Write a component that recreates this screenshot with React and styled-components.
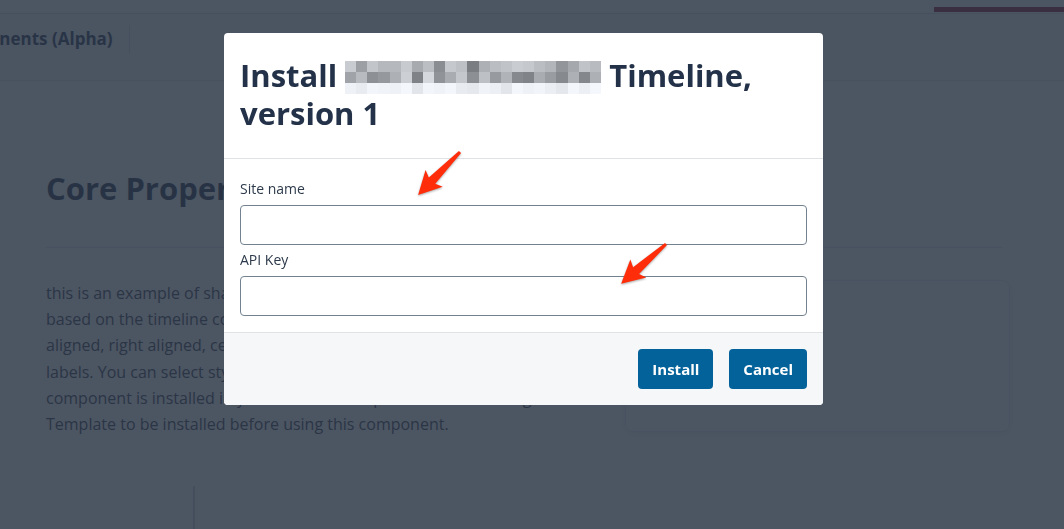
import styled, { createGlobalStyle } from "styled-components";

const GlobalStyle = createGlobalStyle`
  html, body {
    margin: 0;
    padding: 0;
    height: 100%;
  }
  body {
    font-family: "Open Sans", "Liberation Sans", sans-serif;
    background: #fdfdfd;
    overflow: hidden;
  }
  * {
    box-sizing: border-box;
  }
`;

// pixelated redaction in the dialog title
const REDACTED = [
  "c8 9c c2 b5 b5 c7 a7 bb 8a c5 bd 7a ad ba c0 c9 c5 ba b2 92 a5 c0 b8",
  "a0 b8 8d 95 ad cc 7f d5 90 a9 c4 8c bd 97 b0 86 80 a9 99 86 ad 84 ad",
  "ee e8 f2 f0 ee f4 e2 f2 ef f3 e8 e5 f0 ec e2 f3 ee f1 eb e4 f3 ec f4",
].map((row) => row.split(" ").map((v) => parseInt(v, 16)));

const Redaction = () => (
  <RedactionSvg viewBox="0 0 23 3" preserveAspectRatio="none" shapeRendering="crispEdges">
    {REDACTED.map((row, y) =>
      row.map((v, x) => (
        <rect key={`${x}-${y}`} x={x} y={y} width="1.02" height="1.02" fill={`rgb(${v},${v + 3},${Math.min(v + 8, 255)})`} />
      ))
    )}
  </RedactionSvg>
);

const Arrow = ({ left, top, angle }) => (
  <ArrowSvg $left={left} $top={top} width="140" height="140" viewBox="-70 -70 140 140">
    <polygon transform={`rotate(${angle})`} points="0,-1.5 40,-4.5 37,-12 60,0 37,12 40,4.5 0,1.5" />
  </ArrowSvg>
);

const App = () => (
  <>
    <GlobalStyle />
    <Page>
      <TopStrip>
        <AccentBar />
      </TopStrip>
      <NavBar>
        <Tab>Components (Alpha)</Tab>
      </NavBar>
      <Content>
        <Heading>Core Properties</Heading>
        <Rule />
        <Columns>
          <Paragraph>
            this is an example of shared component, a timeline built in LWC. It is
            based on the timeline component and supports vertical layouts with left
            aligned, right aligned, center aligned and alternating items with date
            labels. You can select styles and colors in the property panel. This
            component is installed in your site and it requires the Shared Page
            Template to be installed before using this component.
          </Paragraph>
          <Card />
        </Columns>
        <Preview />
      </Content>
    </Page>

    <Overlay>
      <Dialog>
        <DialogHeader>
          <Title>
            Install <Redaction /> Timeline, version 1
          </Title>
        </DialogHeader>
        <DialogBody>
          <Field>
            <Label>Site name</Label>
            <Input type="text" />
          </Field>
          <Field>
            <Label>API Key</Label>
            <Input type="text" />
          </Field>
        </DialogBody>
        <DialogFooter>
          <Button>Install</Button>
          <Button>Cancel</Button>
        </DialogFooter>
        <Arrow left={166} top={49} angle={134.3} />
        <Arrow left={372} top={141} angle={138.4} />
      </Dialog>
    </Overlay>
  </>
);

const Page = styled.div`
  width: 100%;
  height: 100vh;
  overflow: hidden;
`;

const TopStrip = styled.div`
  height: 14px;
  background: #ffffff;
  border-bottom: 1px solid #d4d7dd;
  display: flex;
  justify-content: flex-end;
  align-items: flex-end;
`;

const AccentBar = styled.div`
  width: 130px;
  height: 5px;
  margin-bottom: 1px;
  background: #83021e;
`;

const NavBar = styled.div`
  height: 67px;
  background: #f3f4f6;
  border-bottom: 1px solid #e3e6ea;
  display: flex;
  align-items: flex-start;
  padding-top: 11px;
  overflow: hidden;
`;

const Tab = styled.div`
  margin-left: -60px;
  padding-right: 16px;
  border-right: 1px solid #d3d7dd;
  font-size: 17px;
  line-height: 28px;
  font-weight: 700;
  color: #0f2647;
  white-space: nowrap;
`;

const Content = styled.div`
  padding: 0 54px 0 46px;
`;

const Heading = styled.h1`
  margin: 88px 0 0;
  font-size: 31px;
  line-height: 38px;
  font-weight: 700;
  color: #0a1d3a;
`;

const Rule = styled.hr`
  margin: 40px 8px 0 0;
  border: none;
  border-top: 1px solid #dfe3e8;
`;

const Columns = styled.div`
  display: flex;
  gap: 24px;
  margin-top: 32px;
`;

const Paragraph = styled.p`
  width: 555px;
  margin: 0;
  font-size: 16px;
  line-height: 26.2px;
  color: #1c2b43;
`;

const Card = styled.div`
  width: 385px;
  height: 152px;
  background: #ffffff;
  border: 1px solid #e8ebee;
  border-radius: 8px;
  box-shadow: 0 2px 6px rgba(0, 0, 0, 0.08);
`;

const Preview = styled.div`
  margin: 49px 0 0 147px;
  height: 100px;
  border-left: 2px solid #cbd0d8;
`;

const Overlay = styled.div`
  position: fixed;
  inset: 0;
  background: rgba(45, 55, 70, 0.85);
`;

const Dialog = styled.div`
  position: relative;
  width: 599px;
  margin: 33px 0 0 224px;
  background: #ffffff;
  border-radius: 4px;
`;

const DialogHeader = styled.div`
  padding: 23px 16px 26px;
  border-bottom: 1px solid #dfe3e8;
`;

const Title = styled.h2`
  margin: 0;
  font-size: 31px;
  line-height: 38px;
  font-weight: 700;
  color: #243249;
`;

const RedactionSvg = styled.svg`
  display: inline-block;
  width: 256px;
  height: 33px;
  vertical-align: -7px;
`;

const DialogBody = styled.div`
  padding: 20px 16px 16px;
`;

const Field = styled.div`
  & + & {
    margin-top: 5px;
  }
`;

const Label = styled.label`
  display: block;
  margin-bottom: 6px;
  font-size: 14px;
  line-height: 20px;
  color: #2d3a4b;
`;

const Input = styled.input`
  display: block;
  width: 100%;
  height: 40px;
  padding: 0 12px;
  border: 1px solid #748290;
  border-radius: 4px;
  background: #ffffff;
  font: inherit;
  outline: none;
`;

const DialogFooter = styled.div`
  display: flex;
  justify-content: flex-end;
  gap: 16px;
  padding: 16px;
  background: #f6f7f9;
  border-top: 1px solid #dfe3e8;
  border-radius: 0 0 4px 4px;
`;

const Button = styled.button`
  height: 40px;
  padding: 0 14px;
  border: none;
  border-radius: 4px;
  background: #04629a;
  color: #ffffff;
  font-family: inherit;
  font-size: 15px;
  font-weight: 700;
`;

const ArrowSvg = styled.svg`
  position: absolute;
  left: ${(p) => p.$left}px;
  top: ${(p) => p.$top}px;
  pointer-events: none;
  overflow: visible;
  fill: #ff2d0a;
  filter: drop-shadow(0 1px 1px rgba(0, 0, 0, 0.35));
`;

export default App;
